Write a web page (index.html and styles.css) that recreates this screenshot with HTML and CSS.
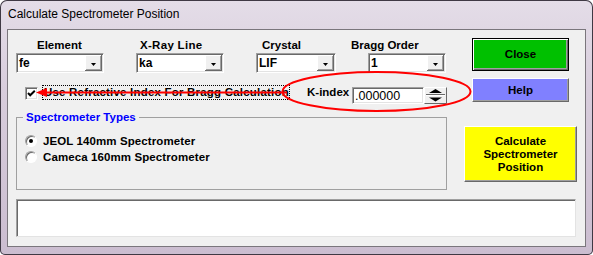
FILE: index.html
```html
<!DOCTYPE html>
<html lang="en">
<head>
  <meta charset="UTF-8">
  <title>Calculate Spectrometer Position</title>
  <link rel="stylesheet" href="styles.css">
</head>
<body>
  <div class="window">
    <div class="titlebar">Calculate Spectrometer Position</div>

    <div class="client">
      <div class="top">
        <div class="main">
          <!-- Combo labels -->
          <div class="labels">
            <span class="lbl lbl-element">Element</span>
            <span class="lbl lbl-xray">X-Ray Line</span>
            <span class="lbl lbl-crystal">Crystal</span>
            <span class="lbl">Bragg Order</span>
          </div>

          <div class="combos">
            <div class="combo w88">
              <span class="combo-text">fe</span>
              <span class="combo-btn"><svg width="5" height="3" viewBox="0 0 5 3"><polygon points="0,0 5,0 2.5,3" fill="#000"/></svg></span>
            </div>
            <div class="combo w88">
              <span class="combo-text">ka</span>
              <span class="combo-btn"><svg width="5" height="3" viewBox="0 0 5 3"><polygon points="0,0 5,0 2.5,3" fill="#000"/></svg></span>
            </div>
            <div class="combo w80">
              <span class="combo-text">LIF</span>
              <span class="combo-btn"><svg width="5" height="3" viewBox="0 0 5 3"><polygon points="0,0 5,0 2.5,3" fill="#000"/></svg></span>
            </div>
            <div class="combo w78">
              <span class="combo-text">1</span>
              <span class="combo-btn"><svg width="5" height="3" viewBox="0 0 5 3"><polygon points="0,0 5,0 2.5,3" fill="#000"/></svg></span>
            </div>
          </div>

          <div class="check-row">
            <span class="checkbox">
              <svg width="9" height="9" viewBox="0 0 9 9"><path d="M1 4 L3.2 6.3 L7.8 1.8" fill="none" stroke="#000" stroke-width="2"/></svg>
            </span>
            <span class="check-label">Use Refractive Index For Bragg Calculation</span>
            <span class="kindex-label">K-index</span>
            <span class="textbox">.000000</span>
            <span class="spinner">
              <svg width="23" height="17" viewBox="0 0 23 17">
                <rect width="23" height="17" fill="#f0f0f0"/>
                <path d="M0.5 16.5V0.5H22.5" fill="none" stroke="#fff"/>
                <path d="M0.5 16.5H22.5V0.5" fill="none" stroke="#696969"/>
                <path d="M2 7.5H21" stroke="#696969"/>
                <path d="M2 8.5H21" stroke="#fff"/>
                <polygon points="5,6 18,6 11.5,2" fill="#000"/>
                <polygon points="5,10.5 18,10.5 11.5,14.5" fill="#000"/>
              </svg>
            </span>
          </div>

          <fieldset class="group">
            <legend>Spectrometer Types</legend>
            <div class="radio-row"><span class="radio checked"></span>JEOL 140mm Spectrometer</div>
            <div class="radio-row"><span class="radio"></span>Cameca 160mm Spectrometer</div>
          </fieldset>
        </div>

        <div class="side">
          <div class="btn btn-close">Close</div>
          <div class="btn btn-help">Help</div>
          <div class="btn btn-calc">Calculate<br>Spectrometer<br>Position</div>
        </div>
      </div>

      <div class="status"></div>
    </div>

    <!-- red marks drawn over the dialog -->
    <svg class="annot" width="593" height="255" viewBox="0 0 593 255">
      <ellipse cx="376.5" cy="91.5" rx="94" ry="19.5" fill="none" stroke="#ff0000" stroke-width="2"/>
      <path d="M44 92.5H287" stroke="#ff0000" stroke-width="2"/>
      <polygon points="36,92.5 47,88 47,97" fill="#ff0000"/>
    </svg>
  </div>
</body>
</html>
```

FILE: styles.css
```css
body {
  margin: 0;
  font-family: "Liberation Sans", Arial, sans-serif;
}

.window {
  position: relative;
  width: 593px;
  height: 255px;
  border-radius: 7px 7px 5px 5px;
  background: linear-gradient(180deg, #e4dde8 0%, #d8cddc 35%, #cbbdd0 100%);
  box-shadow: inset 0 0 0 1px #3f3944;
}

.titlebar {
  height: 29px;
  line-height: 29px;
  padding-left: 8px;
  font-size: 12px;
  color: #000;
}

.client {
  box-sizing: border-box;
  margin: 0 7px;
  height: 218px;
  border: 1px solid #7a767c;
  background: #f0f0f0;
  padding: 0 9px 9px 8px;
  display: flex;
  flex-direction: column;
  font-size: 11.5px;
  font-weight: bold;
  color: #000;
}

.top {
  display: flex;
}

.main {
  width: 431px;
}

.side {
  width: 113px;
  margin-left: 17px;
}

/* labels above the combos */
.labels {
  display: flex;
  margin-top: 9px;
  height: 14px;
  line-height: 13px;
}
.lbl-element { margin-left: 21px; width: 103px; }
.lbl-xray { width: 122px; letter-spacing: 0.3px; }
.lbl-crystal { width: 89px; }

.combos {
  display: flex;
  gap: 32px;
}

.combo {
  box-sizing: border-box;
  height: 20px;
  padding: 1px;
  border: 1px solid;
  border-color: #a0a0a0 #fff #fff #a0a0a0;
  box-shadow: inset 1px 1px #696969, inset -1px -1px #e3e3e3;
  background: #fff;
  display: flex;
  align-items: center;
}
.w88 { width: 88px; }
.w80 { width: 80px; }
.w78 { width: 78px; }

.combo-text {
  padding-left: 1px;
  line-height: 16px;
  font-size: 12px;
}

.combo-btn {
  margin-left: auto;
  width: 17px;
  height: 16px;
  background: #f0f0f0;
  box-shadow: inset -1px -1px #696969, inset 1px 1px #fff, inset -2px -2px #a0a0a0;
  display: flex;
  align-items: center;
  justify-content: center;
}
.combo-btn svg {
  display: block;
  margin-top: 2px;
}

/* checkbox + K-index line */
.check-row {
  display: flex;
  align-items: flex-start;
  margin-top: 12px;
  height: 19px;
}

.checkbox {
  box-sizing: border-box;
  width: 13px;
  height: 13px;
  margin: 2px 0 0 9px;
  border: 1px solid;
  border-color: #a0a0a0 #fff #fff #a0a0a0;
  box-shadow: inset 1px 1px #696969, inset -1px -1px #e3e3e3;
  background: #fff;
  display: flex;
  align-items: center;
  justify-content: center;
}
.checkbox svg { display: block; }

.check-label {
  box-sizing: border-box;
  width: 248px;
  height: 15px;
  margin-left: 4px;
  padding-left: 1px;
  border: 1px dotted #000;
  line-height: 13px;
  letter-spacing: 0.2px;
  white-space: nowrap;
}

.kindex-label {
  width: 45px;
  margin: 1px 0 0 17px;
  line-height: 13px;
}

.textbox {
  box-sizing: border-box;
  width: 72px;
  height: 17px;
  margin-top: 2px;
  padding: 1px 0 0 2px;
  border: 1px solid;
  border-color: #a0a0a0 #fff #fff #a0a0a0;
  box-shadow: inset 1px 1px #696969, inset -1px -1px #e3e3e3;
  background: #fff;
  font-size: 12.5px;
  font-weight: normal;
  line-height: 15px;
}

.spinner {
  margin-top: 2px;
  height: 17px;
}
.spinner svg { display: block; }

/* group box */
.group {
  box-sizing: border-box;
  height: 79px;
  margin: 7px 0 0 0;
  padding: 9px 0 0 8px;
  border: 1px solid #a0a0a0;
  min-width: 0;
}
.group legend {
  margin-left: -2px;
  padding: 0 3px;
  line-height: 13px;
  color: #0000ff;
}

.radio-row {
  display: flex;
  align-items: center;
  height: 16px;
  line-height: 13px;
  letter-spacing: 0.1px;
}

.radio {
  box-sizing: border-box;
  width: 12px;
  height: 12px;
  margin-right: 6px;
  border: 1px solid;
  border-color: #a0a0a0 #fff #fff #a0a0a0;
  border-radius: 50%;
  box-shadow: inset 1px 1px #696969;
  background: #fff;
  display: flex;
  align-items: center;
  justify-content: center;
}
.radio.checked::after {
  content: "";
  width: 4px;
  height: 4px;
  border-radius: 50%;
  background: #000;
}

/* coloured buttons */
.btn {
  box-sizing: border-box;
  display: flex;
  align-items: center;
  justify-content: center;
  text-align: center;
  line-height: 13px;
}
.btn-close {
  width: 97px;
  height: 33px;
  margin: 8px 0 0 8px;
  background: #00c000;
  border: 1px solid #000;
  box-shadow: inset 1px 1px #fff, inset -1px -1px #696969, inset -2px -2px #a0a0a0;
}
.btn-help {
  width: 97px;
  height: 24px;
  margin: 7px 0 0 8px;
  background: #8080ff;
  border: 1px solid;
  border-color: #fff #696969 #696969 #fff;
  box-shadow: inset -1px -1px #a0a0a0;
}
.btn-calc {
  width: 113px;
  height: 56px;
  margin-top: 24px;
  background: #ffff00;
  border: 1px solid;
  border-color: #fff #696969 #696969 #fff;
  box-shadow: inset -1px -1px #a0a0a0;
}

.status {
  box-sizing: border-box;
  height: 39px;
  margin-top: 9px;
  background: #fff;
  border: 1px solid;
  border-color: #a0a0a0 #e3e3e3 #e3e3e3 #a0a0a0;
  box-shadow: inset 1px 1px #696969;
}

.annot {
  position: absolute;
  top: 0;
  left: 0;
  pointer-events: none;
}
```
